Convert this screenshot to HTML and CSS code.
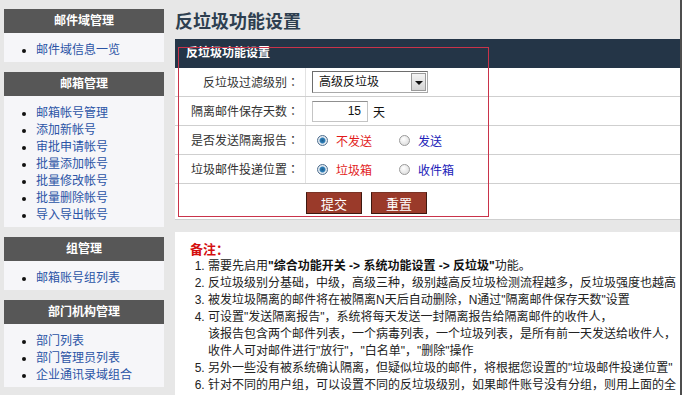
FILE: index.html
```html
<!DOCTYPE html>
<html lang="zh-CN">
<head>
  <meta charset="UTF-8">
  <title>反垃圾功能设置</title>
  <link rel="stylesheet" href="styles.css">
</head>
<body>
  <div class="page">
    <aside class="sidebar">
      <div class="box">
        <div class="box-head">邮件域管理</div>
        <ul class="box-list">
          <li><a href="#">邮件域信息一览</a></li>
        </ul>
      </div>
      <div class="box">
        <div class="box-head">邮箱管理</div>
        <ul class="box-list">
          <li><a href="#">邮箱帐号管理</a></li>
          <li><a href="#">添加新帐号</a></li>
          <li><a href="#">审批申请帐号</a></li>
          <li><a href="#">批量添加帐号</a></li>
          <li><a href="#">批量修改帐号</a></li>
          <li><a href="#">批量删除帐号</a></li>
          <li><a href="#">导入导出帐号</a></li>
        </ul>
      </div>
      <div class="box">
        <div class="box-head">组管理</div>
        <ul class="box-list">
          <li><a href="#">邮箱账号组列表</a></li>
        </ul>
      </div>
      <div class="box">
        <div class="box-head">部门机构管理</div>
        <ul class="box-list">
          <li><a href="#">部门列表</a></li>
          <li><a href="#">部门管理员列表</a></li>
          <li><a href="#">企业通讯录域组合</a></li>
        </ul>
      </div>
    </aside>

    <main class="main">
      <h1 class="title">反垃圾功能设置</h1>

      <section class="panel">
        <div class="panel-head">反垃圾功能设置</div>

        <div class="row">
          <div class="label">反垃圾过滤级别<span class="colon" lang="zh-TW">：</span></div>
          <div class="field">
            <div class="select">
              <span>高级反垃圾</span>
              <span class="select-btn"></span>
            </div>
          </div>
        </div>

        <div class="row">
          <div class="label">隔离邮件保存天数<span class="colon" lang="zh-TW">：</span></div>
          <div class="field">
            <span class="input">15</span>
            <span class="unit">天</span>
          </div>
        </div>

        <div class="row">
          <div class="label">是否发送隔离报告<span class="colon" lang="zh-TW">：</span></div>
          <div class="field">
            <span class="radio checked"></span><span class="opt red">不发送</span>
            <span class="radio"></span><span class="opt blue">发送</span>
          </div>
        </div>

        <div class="row">
          <div class="label">垃圾邮件投递位置<span class="colon" lang="zh-TW">：</span></div>
          <div class="field">
            <span class="radio checked"></span><span class="opt red">垃圾箱</span>
            <span class="radio"></span><span class="opt blue">收件箱</span>
          </div>
        </div>

        <div class="actions">
          <button class="btn">提交</button>
          <button class="btn">重置</button>
        </div>

        <div class="mark"></div>
      </section>

      <section class="notes">
        <div class="notes-title">备注：</div>
        <ol class="notes-list">
          <li>需要先启用<b>"综合功能开关 -&gt; 系统功能设置 -&gt; 反垃圾"</b>功能。</li>
          <li>反垃圾级别分基础，中级，高级三种，级别越高反垃圾检测流程越多，反垃圾强度也越高</li>
          <li>被发垃圾隔离的邮件将在被隔离N天后自动删除，N通过"隔离邮件保存天数"设置</li>
          <li>可设置"发送隔离报告"，系统将每天发送一封隔离报告给隔离邮件的收件人，<br>
            该报告包含两个邮件列表，一个病毒列表，一个垃圾列表，是所有前一天发送给收件人，<br>
            收件人可对邮件进行"放行"，"白名单"，"删除"操作</li>
          <li>另外一些没有被系统确认隔离，但疑似垃圾的邮件，将根据您设置的"垃圾邮件投递位置"</li>
          <li>针对不同的用户组，可以设置不同的反垃圾级别，如果邮件账号没有分组，则用上面的全</li>
        </ol>
      </section>
    </main>
  </div>
</body>
</html>
```

FILE: styles.css
```css
:root {
  --page-bg: #e7e7e7;
  --head-bg: #575757;
  --bar-bg: #243547;
  --link-color: #2b54a6;
  --line-color: #cfcfcf;
  --btn-bg: #9a3a2a;
}

* {
  box-sizing: border-box;
}

body {
  margin: 0;
  font-family: 'Liberation Sans', 'Noto Sans CJK SC', sans-serif;
  font-size: 12px;
  color: #333;
  background-color: var(--page-bg);
}

.page {
  display: flex;
  width: 682px;
  height: 395px;
  overflow: hidden;
  border-right: 2px solid #4d4d4d;
}

/* 左侧菜单 */
.sidebar {
  width: 160px;
  margin-left: 4px;
  padding-top: 9px;
  flex-shrink: 0;
}

.box {
  margin-bottom: 10px;
  background: #f6f6f9;
}

.box-head {
  height: 24px;
  line-height: 24px;
  background: var(--head-bg);
  color: #fff;
  font-weight: bold;
  text-align: center;
}

.box-list {
  margin: 0;
  padding: 9px 0 3px 32px;
  list-style: disc;
  color: #111;
}

.box-list li {
  line-height: 17px;
}

.box-list a {
  color: var(--link-color);
  text-decoration: none;
}

/* 主区域 */
.main {
  display: flex;
  flex-direction: column;
  width: 505px;
  margin-left: 11px;
}

.title {
  margin: 0;
  height: 39px;
  padding-top: 10px;
  font-size: 18px;
  line-height: 24px;
  color: #2e3f50;
}

.panel {
  position: relative;
  background: #fff;
}

.panel-head {
  height: 29px;
  line-height: 29px;
  padding-left: 11px;
  background: var(--bar-bg);
  color: #fff;
  font-weight: bold;
}

.row {
  display: flex;
  height: 29px;
  border-bottom: 1px solid var(--line-color);
}

.label {
  width: 131px;
  padding-right: 6px;
  line-height: 28px;
  text-align: right;
  border-right: 1px solid #e2e2e2;
}

.colon {
  font-family: 'Noto Sans CJK TC', sans-serif;
}

.field {
  display: flex;
  align-items: center;
  padding-left: 6px;
}

.select {
  position: relative;
  width: 116px;
  height: 22px;
  line-height: 20px;
  padding-left: 6px;
  border: 1px solid #a9a9a9;
  border-top-color: #6d6d6d;
  border-left-color: #6d6d6d;
  color: #111;
}

.select-btn {
  position: absolute;
  right: 1px;
  top: 1px;
  width: 15px;
  height: 18px;
  border: 1px solid #9a9a9a;
  background: linear-gradient(#f4f4f4, #d4d4d4);
}

.select-btn::after {
  content: '';
  position: absolute;
  left: 3px;
  top: 7px;
  border-left: 4px solid transparent;
  border-right: 4px solid transparent;
  border-top: 4px solid #111;
}

.input {
  width: 56px;
  height: 21px;
  line-height: 19px;
  padding-right: 6px;
  text-align: right;
  border: 1px solid #c4c4c4;
  border-top-color: #8f8f8f;
  color: #111;
}

.unit {
  margin-left: 5px;
  color: #111;
}

.radio {
  width: 11px;
  height: 11px;
  margin-left: 5px;
  border: 1px solid #9a9a9a;
  border-radius: 50%;
  background: radial-gradient(circle at 40% 35%, #fff, #d6d6d6);
}

.radio.checked {
  border-color: #4f6f8f;
  background: radial-gradient(circle, #1e5f8f 0, #2f7fb8 2.5px, #e8eef4 3.5px, #c9d3dc 100%);
}

.opt {
  margin-left: 8px;
  width: 58px;
}

.red {
  color: #e21b1b;
}

.blue {
  color: #2020b8;
}

.actions {
  display: flex;
  gap: 9px;
  height: 36px;
  padding: 8px 0 0 131px;
  border-bottom: 1px solid var(--line-color);
}

.btn {
  width: 56px;
  height: 22px;
  padding: 0;
  border: 1px solid #3e1810;
  border-top-color: #7a3325;
  background: var(--btn-bg);
  color: #fff;
  font-family: inherit;
  font-size: 13px;
  cursor: pointer;
}

/* 截图上的红色标注框 */
.mark {
  position: absolute;
  left: 3px;
  top: 8px;
  width: 311px;
  height: 170px;
  border: 1px solid #c9334a;
  pointer-events: none;
}

/* 备注 */
.notes {
  flex: 1;
  margin-top: 12px;
  padding: 9px 0 0 15px;
  background: #fff;
  color: #222;
  white-space: nowrap;
  overflow: hidden;
}

.notes-title {
  line-height: 17px;
  font-size: 13px;
  font-weight: bold;
  color: #d40f0f;
}

.notes-list {
  margin: 0;
  padding-left: 18px;
}

.notes-list li {
  line-height: 17px;
}

.notes-list b {
  color: #111;
}
```
